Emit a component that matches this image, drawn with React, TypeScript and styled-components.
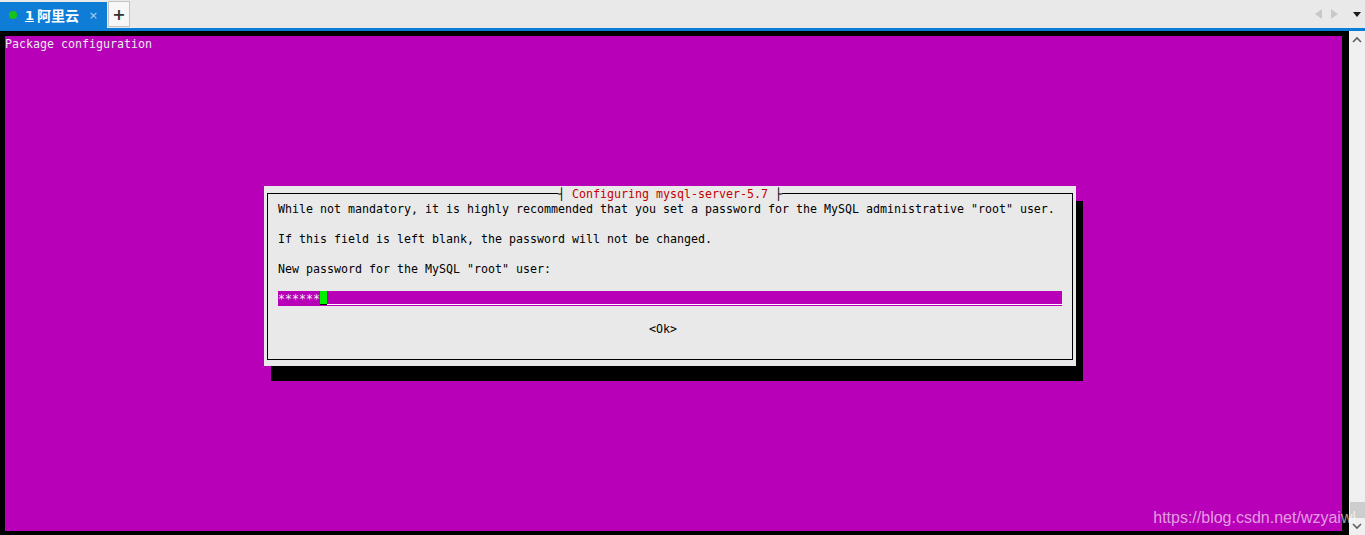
import React from 'react';
import styled, { createGlobalStyle, css } from 'styled-components';

const CELL_W = 7;
const CELL_H = 15;

const GlobalStyle = createGlobalStyle`
  html, body {
    margin: 0;
    padding: 0;
    background: #000;
  }
  * {
    box-sizing: border-box;
  }
`;

// terminal glyphs sit one pixel low in their 15px cell
const cellRow = css`
  height: ${CELL_H}px;
  padding-top: 1px;
`;

const App: React.FC = () => {
  return (
    <>
      <GlobalStyle />
      <Window>
        <TabBar>
          <ActiveTab>
            <StatusDot />
            <TabIndex>1</TabIndex>
            <TabName>阿里云</TabName>
            <TabClose>×</TabClose>
          </ActiveTab>
          <AddTab>+</AddTab>
          <TabSpacer />
          <NavArrows>
            <svg width="8" height="10" viewBox="0 0 8 10">
              <path d="M7 0 L0 5 L7 10 Z" fill="#c9c9c9" />
            </svg>
            <svg width="8" height="10" viewBox="0 0 8 10">
              <path d="M1 0 L8 5 L1 10 Z" fill="#c9c9c9" />
            </svg>
          </NavArrows>
          <MenuCaret>
            <svg width="8" height="5" viewBox="0 0 8 5">
              <path d="M0 0 L8 0 L4 5 Z" fill="#1a1a1a" />
            </svg>
          </MenuCaret>
        </TabBar>
        <BlueRule />
        <Body>
          <Terminal>
            <Screen>
              <ScreenLine>Package configuration</ScreenLine>
              <Dialog>
                <Frame>
                  <DialogTitle>
                    <span>┤ </span>
                    <TitleText>Configuring mysql-server-5.7</TitleText>
                    <span> ├</span>
                  </DialogTitle>
                  <TextRow>
                    While not mandatory, it is highly recommended that you set a password for the MySQL administrative "root" user.
                  </TextRow>
                  <TextRow />
                  <TextRow>If this field is left blank, the password will not be changed.</TextRow>
                  <TextRow />
                  <TextRow>New password for the MySQL "root" user:</TextRow>
                  <TextRow />
                  <InputField>
                    <Stars>******</Stars>
                    <Cursor />
                    <InputFill />
                  </InputField>
                  <TextRow />
                  <ButtonRow>
                    <OkButton>&lt;Ok&gt;</OkButton>
                  </ButtonRow>
                  <TextRow />
                </Frame>
              </Dialog>
            </Screen>
          </Terminal>
          <Scrollbar>
            <ScrollArrow>
              <svg width="10" height="7" viewBox="0 0 10 7">
                <path d="M1 6 L5 2 L9 6" stroke="#606060" strokeWidth="1.6" fill="none" />
              </svg>
            </ScrollArrow>
            <ScrollTrack />
            <ScrollThumb />
            <ScrollArrow>
              <svg width="10" height="7" viewBox="0 0 10 7">
                <path d="M1 1 L5 5 L9 1" stroke="#606060" strokeWidth="1.6" fill="none" />
              </svg>
            </ScrollArrow>
          </Scrollbar>
        </Body>
        <Watermark>https://blog.csdn.net/wzyaiwl</Watermark>
      </Window>
    </>
  );
};

const Window = styled.div`
  position: relative;
  width: 1365px;
  height: 535px;
  display: flex;
  flex-direction: column;
  overflow: hidden;
  background: #000;
`;

const TabBar = styled.div`
  height: 28px;
  display: flex;
  align-items: flex-end;
  background: #e9e9e9;
`;

const ActiveTab = styled.div`
  width: 107px;
  height: 26px;
  display: flex;
  align-items: center;
  padding-left: 9px;
  background: #0f7dd6;
  color: #fff;
`;

const StatusDot = styled.div`
  width: 8px;
  height: 8px;
  border-radius: 50%;
  background: #16c416;
  margin-right: 8px;
`;

const TabIndex = styled.span`
  font-family: 'DejaVu Sans', 'Noto Sans', sans-serif;
  font-size: 13px;
  font-weight: 700;
  text-decoration: underline;
  margin-right: 3px;
`;

const TabName = styled.span`
  font-family: 'Noto Sans CJK SC', sans-serif;
  font-size: 14px;
  font-weight: 700;
`;

const TabClose = styled.span`
  margin-left: auto;
  margin-right: 9px;
  font-family: 'DejaVu Sans', sans-serif;
  font-size: 11px;
  color: #b8d4f0;
`;

const AddTab = styled.div`
  width: 22px;
  height: 26px;
  margin-left: 1px;
  margin-bottom: 1px;
  display: flex;
  align-items: center;
  justify-content: center;
  background: #f7f7f7;
  border: 1px solid #c4c4c4;
  font-family: 'DejaVu Sans', sans-serif;
  font-size: 16px;
  font-weight: 700;
  color: #333;
`;

const TabSpacer = styled.div`
  flex: 1;
`;

const NavArrows = styled.div`
  height: 28px;
  display: flex;
  align-items: center;
  gap: 7px;
  margin-right: 15px;
`;

const MenuCaret = styled.div`
  height: 28px;
  display: flex;
  align-items: center;
  margin-right: 4px;
`;

const BlueRule = styled.div`
  height: 3px;
  background: #0a7dd5;
`;

const Body = styled.div`
  flex: 1;
  display: flex;
`;

const Terminal = styled.div`
  width: 1349px;
  padding: 5px 7px 4px 5px;
  background: #000;
`;

const Screen = styled.div`
  width: ${191 * CELL_W}px;
  height: ${33 * CELL_H}px;
  background: #b800b8;
  font-family: 'DejaVu Sans Mono', 'Liberation Mono', monospace;
  font-size: 11.63px;
  line-height: ${CELL_H}px;
  white-space: pre;
`;

const ScreenLine = styled.div`
  ${cellRow}
  color: #ececec;
`;

const Dialog = styled.div`
  width: ${116 * CELL_W}px;
  height: ${12 * CELL_H}px;
  margin-top: ${9 * CELL_H}px;
  margin-left: ${37 * CELL_W}px;
  padding: 7px 3px 6px 3px;
  background: #e9e9e9;
  box-shadow: ${CELL_W}px ${CELL_H}px 0 #000;
`;

const Frame = styled.div`
  position: relative;
  height: 100%;
  border: 1px solid #000;
  padding: 7px 0 8px 10px;
  color: #000;
`;

const DialogTitle = styled.div`
  ${cellRow}
  position: absolute;
  top: -8px;
  left: ${41 * CELL_W + 3}px;
  background: #e9e9e9;
  color: #000;
`;

const TitleText = styled.span`
  color: #c40000;
`;

const TextRow = styled.div`
  ${cellRow}
`;

const InputField = styled.div`
  width: ${112 * CELL_W}px;
  height: ${CELL_H}px;
  display: flex;
  align-items: flex-start;
  background: #b800b8;
`;

const Stars = styled.span`
  ${cellRow}
  color: #ececec;
`;

const Cursor = styled.span`
  width: ${CELL_W}px;
  height: 14px;
  background: #00f000;
  border-bottom: 1px solid #000;
`;

const InputFill = styled.span`
  flex: 1;
  height: 14px;
  border-bottom: 1px solid #fff;
`;

const ButtonRow = styled.div`
  ${cellRow}
  padding-left: ${53 * CELL_W}px;
`;

const OkButton = styled.span`
  color: #000;
`;

const Scrollbar = styled.div`
  width: 16px;
  display: flex;
  flex-direction: column;
  align-items: center;
  background: #f0f0f0;
`;

const ScrollArrow = styled.div`
  height: 17px;
  display: flex;
  align-items: center;
  justify-content: center;
`;

const ScrollTrack = styled.div`
  flex: 1;
`;

const ScrollThumb = styled.div`
  width: 15px;
  height: 16px;
  margin-left: 1px;
  background: #cdcdcd;
`;

const Watermark = styled.div`
  position: absolute;
  right: 9px;
  bottom: 8px;
  font-family: 'Liberation Sans', Arial, sans-serif;
  font-size: 16px;
  color: rgba(255, 255, 255, 0.62);
  white-space: nowrap;
`;

export default App;
